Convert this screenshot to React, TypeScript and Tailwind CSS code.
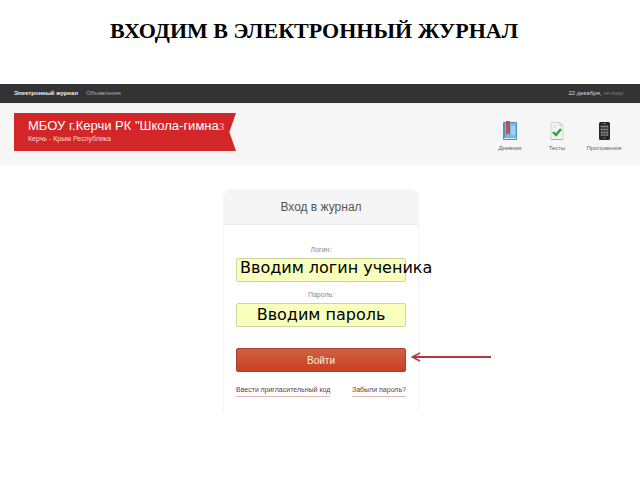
import React from 'react';

const DiaryIcon: React.FC = () => (
  <svg width="16" height="20" viewBox="0 0 16 20" aria-hidden="true">
    <rect x="1" y="1" width="14" height="18" rx="1" fill="#4c90c6" />
    <rect x="3" y="2" width="11" height="15" fill="#7db8e4" />
    <rect x="9" y="5" width="4" height="9" fill="#a3cff0" />
    <path d="M2 17.5h12" stroke="#d9ebf7" strokeWidth="1" />
    <path d="M4 0h4v14l-2-2-2 2z" fill="#b5544f" />
  </svg>
);

const TestsIcon: React.FC = () => (
  <svg width="16" height="20" viewBox="0 0 16 20" aria-hidden="true">
    <path d="M2 1.5h9l3 3v14H2z" fill="#f3f4f3" stroke="#d2d4d2" />
    <path d="M11 1.5v3h3" fill="none" stroke="#c9cbc9" />
    <path d="M4 4.5h4M4 6.5h3" stroke="#dcdedc" />
    <path d="M2 18.5h12" stroke="#a9aba9" />
    <path d="M4 11l3 3 5-6" fill="none" stroke="#2fa044" strokeWidth="2.4" />
  </svg>
);

const PhoneIcon: React.FC = () => (
  <svg width="16" height="20" viewBox="0 0 16 20" aria-hidden="true">
    <rect x="3" y="1" width="11" height="18" rx="1.5" fill="#262626" />
    <path d="M7 2.5h3" stroke="#777" />
    <rect x="4.5" y="4" width="8" height="11" fill="#484848" />
    <path d="M5 5.5h7M5 8.5h7M5 11.5h7M5 14h7" stroke="#a5a5a5" strokeDasharray="1.6 1.1" />
    <rect x="7.5" y="16.5" width="2" height="1" fill="#888" />
  </svg>
);

const shortcuts = [
  { title: 'Дневник', href: '#diary', icon: <DiaryIcon /> },
  { title: 'Тесты', href: '#tests', icon: <TestsIcon /> },
  { title: 'Приложения', href: '#apps', icon: <PhoneIcon /> },
];

const LoginForm: React.FC = () => {
  return (
    <form
      className="w-[196px] rounded-t-lg border-x border-[#f5f5f5] bg-white text-center"
      onSubmit={(e) => e.preventDefault()}
    >
      <h2 className="h-9 rounded-t-lg border-b border-[#ececec] bg-[#f5f5f5] text-[12px] leading-9 text-[#555]">
        Вход в журнал
      </h2>

      <div className="px-3 pt-[17px] pb-4">
        <label htmlFor="login" className="block text-[7px] leading-4 text-[#888]">
          Логин:
        </label>
        <div className="relative">
          <input
            id="login"
            type="text"
            className="block h-6 w-full rounded-xs border border-[#cfd3a0] bg-[#f9ffbd]"
          />
          <span className="pointer-events-none absolute top-0 left-1 font-['DejaVu_Sans',sans-serif] text-[16px] leading-5 whitespace-nowrap text-black">
            Вводим логин ученика
          </span>
        </div>

        <label htmlFor="password" className="mt-[5px] block text-[7px] leading-4 text-[#888]">
          Пароль:
        </label>
        <div className="relative">
          <input
            id="password"
            type="password"
            className="block h-6 w-full rounded-xs border border-[#cfd3a0] bg-[#f9ffbd]"
          />
          <span className="pointer-events-none absolute inset-x-0 top-0 font-['DejaVu_Sans',sans-serif] text-[16px] leading-6 whitespace-nowrap text-black">
            Вводим пароль
          </span>
        </div>

        <div className="relative mt-[21px]">
          <button
            type="submit"
            className="block h-6 w-full rounded-xs border border-[#a9412c] bg-linear-to-b from-[#cf6046] to-[#c93f1f] text-[10px] text-[#fff0dc]"
          >
            Войти
          </button>
          <svg
            width="80"
            height="10"
            viewBox="0 0 80 10"
            className="absolute top-1 left-full ml-[5px]"
            aria-hidden="true"
          >
            <path d="M3 5h77" stroke="#b5373c" strokeWidth="2" />
            <path d="M9 1L1 5l8 4" fill="none" stroke="#b5373c" strokeWidth="1.5" />
          </svg>
        </div>

        <div className="mt-3 flex justify-between text-[7px] leading-3 whitespace-nowrap text-[#6e3c38]">
          <a href="#invite" className="border-b border-[#dcb9b4]">
            Ввести пригласительный код
          </a>
          <a href="#forgot" className="border-b border-[#dcb9b4]">
            Забыли пароль?
          </a>
        </div>
      </div>
    </form>
  );
};

const App: React.FC = () => {
  return (
    <div className="min-h-screen bg-white font-['Liberation_Sans',Arial,sans-serif]">
      <h1 className="pt-4 pr-7 pb-[38px] pl-4 text-center font-['Liberation_Serif',serif] text-[22px] leading-[30px] font-bold text-black">
        ВХОДИМ В ЭЛЕКТРОННЫЙ ЖУРНАЛ
      </h1>

      <nav className="flex h-[19px] items-center justify-between bg-[#333] pr-4 pl-[14px] text-[6px]">
        <div className="flex gap-2">
          <a href="#journal" className="font-bold text-[#eee]">
            Электронный журнал
          </a>
          <a href="#ads" className="text-[#aaa]">
            Объявления
          </a>
        </div>
        <p className="text-[#777]">
          <span className="text-[#ddd]">22 декабря,</span> четверг
        </p>
      </nav>

      <header className="flex items-start justify-between bg-[#f6f6f6] pt-[10px] pr-4 pb-3 pl-[14px]">
        <div className="h-[38px] w-[222px] bg-[#d22629] pl-[14px] text-white [clip-path:polygon(0_0,100%_0,97%_50%,100%_100%,0_100%)]">
          <p className="pt-1 text-[13px] leading-[18px] whitespace-nowrap">
            МБОУ г.Керчи РК "Школа-гимна<span className="text-[#e99a98]">з</span>
          </p>
          <p className="text-[7px] leading-[8px] text-[#fbd5d2]">Керчь - Крым Республика</p>
        </div>
        <div className="flex gap-[7px] pt-2">
          {shortcuts.map((item) => (
            <a
              key={item.title}
              href={item.href}
              className="flex w-10 flex-col items-center gap-[2px] text-[6px] leading-[10px] text-[#666]"
            >
              {item.icon}
              {item.title}
            </a>
          ))}
        </div>
      </header>

      <main className="flex justify-center pt-6 pl-0.5">
        <LoginForm />
      </main>
    </div>
  );
};

export default App;
